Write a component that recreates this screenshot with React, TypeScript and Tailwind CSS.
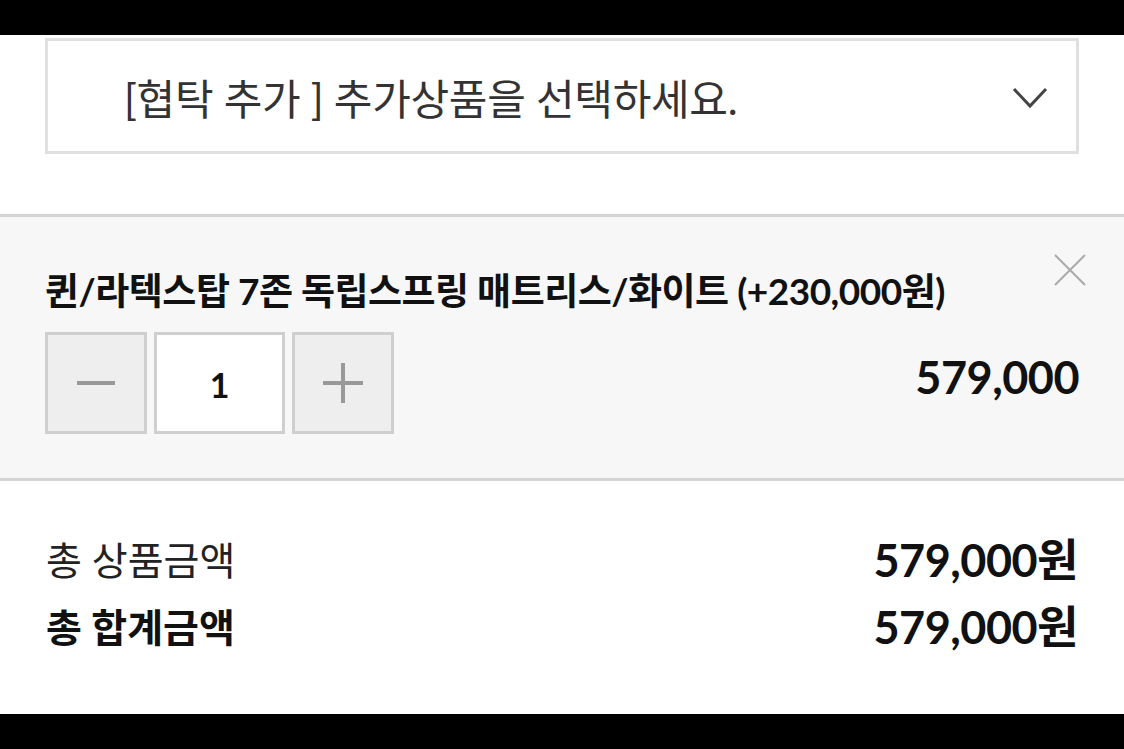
const font = { fontFamily: "Lato, 'Noto Sans CJK KR', sans-serif" };

export default function App() {
  return (
    <div className="flex h-[749px] w-[1124px] flex-col bg-white text-[#111]" style={font}>
      <div className="h-[35px] bg-black" />
      <div className="px-[45px] pt-[3px]">
        <div className="flex h-[116px] items-center justify-between border-[3px] border-[#e0e0e0] pl-[76px] pr-[28px]">
          <span className="mt-[6px] text-[42px] leading-none tracking-[-0.3px] text-[#333]">
            [협탁 추가 ] 추가상품을 선택하세요.
          </span>
          <svg width="36" height="24" viewBox="0 0 36 24" className="mt-[4px]">
            <polyline points="2,3 18,20 34,3" fill="none" stroke="#444" strokeWidth="3" />
          </svg>
        </div>
      </div>
      <div className="mt-[60px] border-y-[3px] border-[#d4d4d4] bg-[#f7f7f7] px-[45px] pb-[44px] pt-[36px]">
        <div className="flex items-start justify-between">
          <span className="mt-[19px] text-[37px] font-bold leading-none tracking-[-0.5px]">
            퀸/라텍스탑 7존 독립스프링 매트리스/화이트 (+230,000원)
          </span>
          <svg width="34" height="34" viewBox="0 0 34 34" className="mr-[-8px]">
            <path d="M2 2 L32 32 M32 2 L2 32" stroke="#aaa" strokeWidth="2" />
          </svg>
        </div>
        <div className="mt-[23px] flex items-center justify-between">
          <div className="flex gap-[7px]">
            <div className="flex h-[102px] w-[102px] items-center justify-center border-[3px] border-[#cfcfcf] bg-[#eeeeee]">
              <svg width="38" height="6" viewBox="0 0 38 6">
                <path d="M0 3 H38" stroke="#999" strokeWidth="4" />
              </svg>
            </div>
            <div className="flex h-[102px] w-[131px] items-center justify-center border-[3px] border-[#cfcfcf] bg-white pt-[2px] text-[34px] font-bold">
              1
            </div>
            <div className="flex h-[102px] w-[102px] items-center justify-center border-[3px] border-[#cfcfcf] bg-[#eeeeee]">
              <svg width="40" height="40" viewBox="0 0 40 40">
                <path d="M0 20 H40 M20 0 V40" stroke="#999" strokeWidth="4" />
              </svg>
            </div>
          </div>
          <span className="mb-[12px] text-[45px] font-bold leading-none tracking-[-0.5px]">579,000</span>
        </div>
      </div>
      <div className="flex-1 px-[46px] pt-[57px]">
        <div className="flex items-center justify-between">
          <span className="text-[39px] leading-none text-[#222]">총 상품금액</span>
          <span className="text-[45px] font-bold leading-none tracking-[-0.5px]">579,000원</span>
        </div>
        <div className="mt-[22px] flex items-center justify-between">
          <span className="text-[39px] font-bold leading-none">총 합계금액</span>
          <span className="text-[45px] font-bold leading-none tracking-[-0.5px]">579,000원</span>
        </div>
      </div>
      <div className="h-[35px] bg-black" />
    </div>
  );
}
